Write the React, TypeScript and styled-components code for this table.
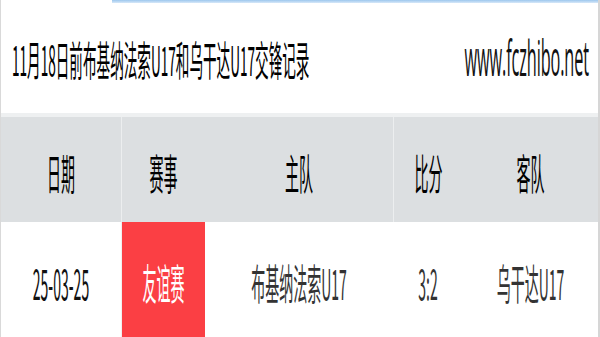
import React from "react";
import styled, { createGlobalStyle } from "styled-components";

const GlobalStyle = createGlobalStyle`
  html, body { margin: 0; padding: 0; background: #ffffff; }
  body { font-family: "Noto Sans CJK SC", "Noto Sans", sans-serif; overflow: hidden; }
`;

const Frame = styled.div`
  width: 600px;
  height: 337px;
  overflow: hidden;
  box-sizing: border-box;
  border-left: 1px solid #d9d9d9;
  border-right: 2px solid #d6d6d6;
  background: #ffffff;
`;

const TopAccent = styled.div`
  height: 3px;
  margin-left: 111px;
  background: linear-gradient(#9dc7ee, #d7e8f8);
`;

const TitleRow = styled.div`
  height: 110px;
  display: flex;
  align-items: center;
  justify-content: space-between;
  padding: 0 9px 0 11px;
  border-bottom: 4px solid #eef0f1;
`;

const Stretch = styled.span<{ $color?: string; $size?: number; $weight?: number }>`
  display: inline-block;
  font-size: ${(p) => p.$size ?? 14}px;
  line-height: 14px;
  color: ${(p) => p.$color ?? "#111"};
  font-weight: ${(p) => p.$weight ?? 400};
  transform: scaleY(3);
  white-space: nowrap;
`;

const Site = styled(Stretch)`
  font-family: "Open Sans", "Noto Sans", sans-serif;
  letter-spacing: -0.1px;
`;

const cols = "120px 84px 188px 70px 1fr";

const HeaderRow = styled.div`
  display: grid;
  grid-template-columns: ${cols};
  height: 105px;
  background: #dcdfe1;
`;

const HeadCell = styled.div<{ $divider?: boolean }>`
  display: flex;
  align-items: center;
  justify-content: center;
  padding-top: 4px;
  border-left: ${(p) => (p.$divider ? "1px solid #eceeef" : "none")};
`;

const BodyRow = styled.div`
  display: grid;
  grid-template-columns: ${cols};
  height: 125px;
  background: #ffffff;
`;

const BodyCell = styled.div<{ $hl?: boolean }>`
  display: flex;
  align-items: center;
  justify-content: center;
  padding-bottom: 6px;
  background: ${(p) => (p.$hl ? "#fb3f44" : "transparent")};
  border-left: ${(p) => (p.$hl ? "1px solid #f0f0f0" : "none")};
`;

const headers = ["日期", "赛事", "主队", "比分", "客队"];

export default function App() {
  return (
    <>
      <GlobalStyle />
      <Frame>
        <TopAccent />
        <TitleRow>
          <Stretch $color="#000" $size={13.6}>11月18日前布基纳法索U17和乌干达U17交锋记录</Stretch>
          <Site $color="#111" $size={16.3}>www.fczhibo.net</Site>
        </TitleRow>
        <HeaderRow>
          {headers.map((h, i) => (
            <HeadCell key={h} $divider={i === 1 || i === 3}>
              <Stretch $color="#000">{h}</Stretch>
            </HeadCell>
          ))}
        </HeaderRow>
        <BodyRow>
          <BodyCell><Stretch $color="#111">25-03-25</Stretch></BodyCell>
          <BodyCell $hl><Stretch $color="#ffffff">友谊赛</Stretch></BodyCell>
          <BodyCell><Stretch $color="#333">布基纳法索U17</Stretch></BodyCell>
          <BodyCell><Stretch $color="#333">3:2</Stretch></BodyCell>
          <BodyCell><Stretch $color="#333">乌干达U17</Stretch></BodyCell>
        </BodyRow>
      </Frame>
    </>
  );
}
